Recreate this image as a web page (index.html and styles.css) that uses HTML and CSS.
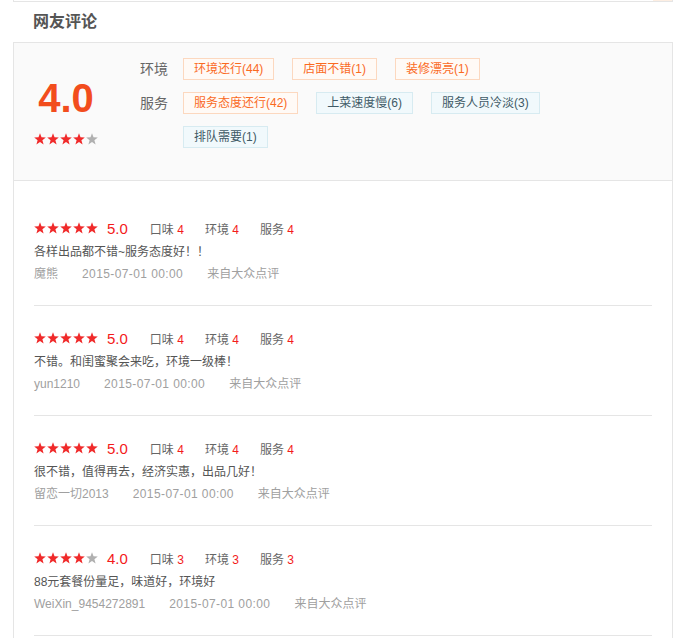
FILE: index.html
```html
<!DOCTYPE html>
<html lang="zh">
<head>
    <meta charset="UTF-8">
    <title>网友评论</title>
    <link rel="stylesheet" href="styles.css">
</head>
<body>
    <svg class="defs" width="0" height="0">
        <symbol id="star" viewBox="0 0 12 12">
            <polygon points="6,0.3 7.5,4.3 11.8,4.5 8.4,7.2 9.6,11.5 6,9 2.4,11.5 3.6,7.2 0.2,4.5 4.5,4.3"/>
        </symbol>
    </svg>

    <div class="prev-box"><span class="prev-tab"></span></div>

    <h2 class="title">网友评论</h2>

    <div class="comments">
        <!-- note globale -->
        <div class="summary">
            <div class="score">
                <div class="score-num">4.0</div>
                <div class="stars">
                    <svg class="star on"><use href="#star"/></svg><svg class="star on"><use href="#star"/></svg><svg class="star on"><use href="#star"/></svg><svg class="star on"><use href="#star"/></svg><svg class="star"><use href="#star"/></svg>
                </div>
            </div>
            <div class="tag-groups">
                <div class="tag-group">
                    <span class="tag-label">环境</span>
                    <div class="tags">
                        <span class="tag good">环境还行(44)</span>
                        <span class="tag good">店面不错(1)</span>
                        <span class="tag good">装修漂亮(1)</span>
                    </div>
                </div>
                <div class="tag-group">
                    <span class="tag-label">服务</span>
                    <div class="tags">
                        <span class="tag good">服务态度还行(42)</span>
                        <span class="tag bad">上菜速度慢(6)</span>
                        <span class="tag bad">服务人员冷淡(3)</span>
                        <span class="tag bad">排队需要(1)</span>
                    </div>
                </div>
            </div>
        </div>

        <!-- liste des avis -->
        <div class="review-list">
            <div class="review">
                <div class="review-head">
                    <span class="stars"><svg class="star on"><use href="#star"/></svg><svg class="star on"><use href="#star"/></svg><svg class="star on"><use href="#star"/></svg><svg class="star on"><use href="#star"/></svg><svg class="star on"><use href="#star"/></svg></span>
                    <span class="review-score">5.0</span>
                    <span class="sub">口味 <em>4</em></span>
                    <span class="sub">环境 <em>4</em></span>
                    <span class="sub">服务 <em>4</em></span>
                </div>
                <p class="review-text">各样出品都不错~服务态度好！！</p>
                <div class="review-meta"><span>魔熊</span><span class="date">2015-07-01 00:00</span><span>来自大众点评</span></div>
            </div>
            <div class="review">
                <div class="review-head">
                    <span class="stars"><svg class="star on"><use href="#star"/></svg><svg class="star on"><use href="#star"/></svg><svg class="star on"><use href="#star"/></svg><svg class="star on"><use href="#star"/></svg><svg class="star on"><use href="#star"/></svg></span>
                    <span class="review-score">5.0</span>
                    <span class="sub">口味 <em>4</em></span>
                    <span class="sub">环境 <em>4</em></span>
                    <span class="sub">服务 <em>4</em></span>
                </div>
                <p class="review-text">不错。和闺蜜聚会来吃，环境一级棒！</p>
                <div class="review-meta"><span>yun1210</span><span class="date">2015-07-01 00:00</span><span>来自大众点评</span></div>
            </div>
            <div class="review">
                <div class="review-head">
                    <span class="stars"><svg class="star on"><use href="#star"/></svg><svg class="star on"><use href="#star"/></svg><svg class="star on"><use href="#star"/></svg><svg class="star on"><use href="#star"/></svg><svg class="star on"><use href="#star"/></svg></span>
                    <span class="review-score">5.0</span>
                    <span class="sub">口味 <em>4</em></span>
                    <span class="sub">环境 <em>4</em></span>
                    <span class="sub">服务 <em>4</em></span>
                </div>
                <p class="review-text">很不错，值得再去，经济实惠，出品几好！</p>
                <div class="review-meta"><span>留恋一切2013</span><span class="date">2015-07-01 00:00</span><span>来自大众点评</span></div>
            </div>
            <div class="review">
                <div class="review-head">
                    <span class="stars"><svg class="star on"><use href="#star"/></svg><svg class="star on"><use href="#star"/></svg><svg class="star on"><use href="#star"/></svg><svg class="star on"><use href="#star"/></svg><svg class="star"><use href="#star"/></svg></span>
                    <span class="review-score">4.0</span>
                    <span class="sub">口味 <em>3</em></span>
                    <span class="sub">环境 <em>3</em></span>
                    <span class="sub">服务 <em>3</em></span>
                </div>
                <p class="review-text">88元套餐份量足，味道好，环境好</p>
                <div class="review-meta"><span>WeiXin_9454272891</span><span class="date">2015-07-01 00:00</span><span>来自大众点评</span></div>
            </div>
        </div>
    </div>
</body>
</html>
```

FILE: styles.css
```css
body {
    margin: 0;
    background-color: #fff;
    font-family: "Liberation Sans", "Noto Sans CJK SC", sans-serif;
    font-size: 12px;
    color: #555;
}

.defs {
    position: absolute;
}

/* bloc précédent coupé en haut */
.prev-box {
    margin-left: 13px;
    width: 660px;
    height: 2px;
    box-sizing: border-box;
    border: 1px solid #e5e5e5;
    border-top: none;
    display: flex;
    justify-content: flex-end;
}

.prev-tab {
    width: 19px;
    height: 1px;
    background-color: #fdeee2;
}

.title {
    margin: 0;
    padding: 8px 0 8px 33px;
    font-size: 16px;
    line-height: 24px;
    font-weight: bold;
    color: #555;
}

.comments {
    margin-left: 13px;
    width: 660px;
    box-sizing: border-box;
    border: 1px solid #e5e5e5;
    border-bottom: none;
    min-height: 600px;
}

/* note globale */
.summary {
    display: flex;
    background-color: #fafafa;
    border-bottom: 1px solid #e5e5e5;
    padding: 15px 0 20px;
}

.score {
    width: 104px;
    margin-right: 22px;
    text-align: center;
}

.score-num {
    margin-top: 17px;
    font-size: 40px;
    line-height: 46px;
    font-weight: bold;
    color: #f24d1d;
}

.stars {
    display: inline-flex;
    gap: 1px;
}

.score .stars {
    margin-top: 12px;
}

.star {
    width: 12px;
    height: 12px;
    fill: #b0b0b0;
}

.star.on {
    fill: #f02a2a;
}

.tag-group {
    display: flex;
}

.tag-label {
    width: 28px;
    margin-right: 15px;
    font-size: 14px;
    line-height: 22px;
    color: #666;
}

.tags {
    width: 420px;
    display: flex;
    flex-wrap: wrap;
    column-gap: 18px;
}

.tag {
    height: 22px;
    box-sizing: border-box;
    line-height: 20px;
    padding: 0 10px;
    margin-bottom: 12px;
    font-size: 12px;
    border: 1px solid;
}

.tag.good {
    color: #fa6a1f;
    border-color: #fcd8bf;
    background-color: #fffaf6;
}

.tag.bad {
    color: #3f5a66;
    border-color: #d7ebf1;
    background-color: #f1f9fc;
}

/* liste des avis */
.review-list {
    padding: 15px 20px 0 20px;
}

.review {
    padding: 20px 0 21px;
    border-bottom: 1px solid #e5e5e5;
}

.review-head {
    display: flex;
    align-items: center;
    height: 24px;
}

.review-score {
    margin-left: 9px;
    margin-right: 22px;
    font-size: 15px;
    color: #f31b1b;
}

.sub {
    margin-right: 21px;
    color: #666;
}

.sub em {
    font-style: normal;
    color: #f31b1b;
}

.review-text {
    margin: 0;
    line-height: 24px;
    color: #555;
}

.review-meta {
    line-height: 20px;
    color: #a0a0a0;
}

.review-meta span {
    margin-right: 24px;
}

.review-meta .date {
    letter-spacing: 0.4px;
}
```
